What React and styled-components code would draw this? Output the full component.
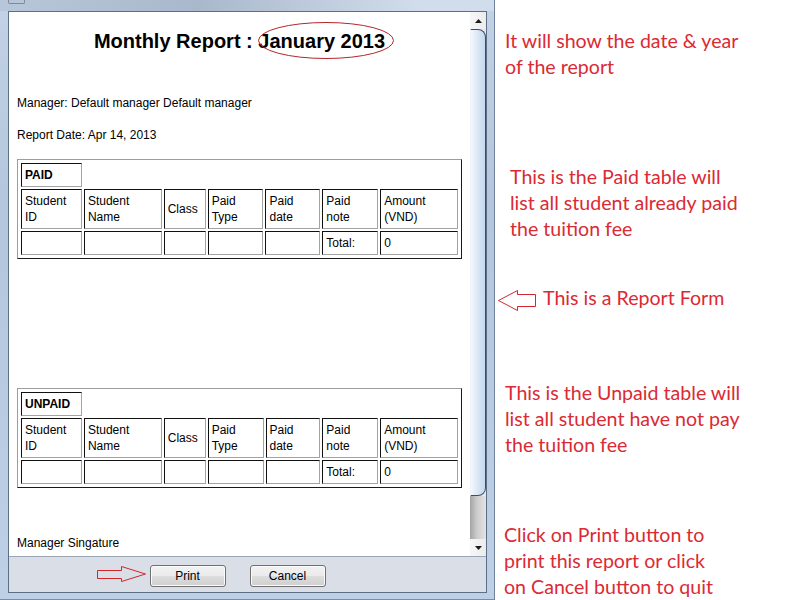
import React from "react";
import styled, { createGlobalStyle } from "styled-components";

const GlobalStyle = createGlobalStyle`
  html, body {
    margin: 0;
    padding: 0;
    background: #fff;
  }
  body {
    font-family: "Liberation Sans", Arial, sans-serif;
  }
`;

const Page = styled.div`
  display: flex;
  width: 800px;
  height: 600px;
  overflow: hidden;
  background: #fff;
`;

// ---- dialog window ----

const Window = styled.div`
  box-sizing: border-box;
  width: 495px;
  height: 600px;
  flex-shrink: 0;
  display: flex;
  flex-direction: column;
  padding: 0 7px 6px 8px;
  background: linear-gradient(to bottom, #c3d2e5 0%, #b4c6dc 35%, #bdd0e6 100%);
  border-right: 1px solid #6f819a;
  border-bottom: 1px solid #7a8ca5;
`;

const TitleStrip = styled.div`
  height: 11px;
  flex-shrink: 0;
  display: flex;
  align-items: flex-start;
  background: linear-gradient(to right, rgba(150, 165, 185, 0.25), rgba(120, 135, 155, 0.35) 40%, rgba(230, 238, 246, 0.4) 85%);
  margin: 0 -7px 0 -8px;
  padding-left: 8px;
`;

const WindowIcon = styled.div`
  width: 15px;
  height: 3px;
  border: 1px solid #7b8aa0;
  border-top: none;
  border-radius: 0 0 2px 2px;
`;

const Client = styled.div`
  flex: 1;
  display: flex;
  flex-direction: column;
  border: 1px solid #5d6e87;
  background: #dadee6;
`;

const Viewport = styled.div`
  box-sizing: border-box;
  height: 545px;
  display: flex;
  border-bottom: 1px solid #9aa5b5;
`;

const Pane = styled.div`
  flex: 1;
  background: #fff;
  padding: 0 8px;
  overflow: hidden;
  color: #000;
`;

const Title = styled.div`
  margin-top: 17px;
  text-align: center;
  font-size: 20px;
  font-weight: 700;
  line-height: 24px;
`;

const Highlight = styled.span`
  position: relative;
`;

const Ellipse = styled.svg`
  position: absolute;
  left: 0;
  top: -8px;
  overflow: visible;
`;

const InfoLine = styled.div`
  margin-top: ${(p) => p.$top}px;
  font-size: 12px;
  line-height: 14px;
`;

const ReportTable = styled.table`
  margin-top: ${(p) => p.$top}px;
  border-collapse: separate;
  border-spacing: 2px;
  padding: 1px;
  border: 1px solid;
  border-color: #9d9d9d #1a1a1a #1a1a1a #9d9d9d;
  font-size: 12px;
  line-height: 16px;
`;

const Cell = styled.td`
  width: ${(p) => (p.$w ? `${p.$w}px` : "auto")};
  padding: 3px;
  border: 1px solid;
  border-color: #111 #a3a3a3 #a3a3a3 #111;
  vertical-align: middle;
  text-align: left;
  font-weight: ${(p) => (p.$bold ? 700 : 400)};
`;

// ---- scrollbar ----

const Scrollbar = styled.div`
  width: 16px;
  display: flex;
  flex-direction: column;
  background: #e9e9e9;
`;

const ScrollButton = styled.div`
  height: 17px;
  display: flex;
  align-items: center;
  justify-content: center;
  background: linear-gradient(to right, #f7f7f7, #ececec);
`;

const Thumb = styled.div`
  box-sizing: border-box;
  height: 467px;
  border: 1px solid #3f4d63;
  border-left: 1px solid #eef4fa;
  border-radius: 0 8px 8px 0;
  background: linear-gradient(to right, #f4f8fc, #dbe8f5 45%, #c4d8ee 100%);
`;

const Track = styled.div`
  flex: 1;
  background: linear-gradient(to right, #a4a4a4, #cdcdcd 45%, #e4e4e4);
`;

// ---- button bar ----

const ButtonBar = styled.div`
  position: relative;
  flex: 1;
  display: flex;
  justify-content: center;
  align-items: flex-start;
  gap: 24px;
  padding: 8px 20px 0 0;
`;

const PushButton = styled.button`
  box-sizing: border-box;
  width: 76px;
  height: 22px;
  padding: 0;
  font-family: "Liberation Sans", Arial, sans-serif;
  font-size: 12px;
  color: #000;
  border: 1px solid #707070;
  border-radius: 3px;
  background: linear-gradient(to bottom, #f2f2f2 0%, #ebebeb 48%, #dddddd 52%, #cfcfcf 100%);
  box-shadow: inset 0 0 0 1px #fbfbfb;
`;

const PointerArrow = styled.svg`
  position: absolute;
  left: 88px;
  top: 9px;
`;

// ---- annotations ----

const Notes = styled.div`
  flex: 1;
  display: flex;
  flex-direction: column;
  font-family: Lato, "Open Sans", sans-serif;
  font-size: 19.6px;
  line-height: 26px;
  color: #db2a33;
`;

const Note = styled.div`
  margin-top: ${(p) => p.$top}px;
  padding-left: ${(p) => p.$indent}px;
`;

const NoteRow = styled.div`
  display: flex;
  align-items: flex-start;
  gap: 6px;
  margin-top: ${(p) => p.$top}px;
  padding-left: 3px;
`;

const LeftArrow = styled.svg`
  margin-top: 5px;
  flex-shrink: 0;
`;

const widths = [53, 70, 34, 48, 47, 48, 70];
const headers = ["Student ID", "Student Name", "Class", "Paid Type", "Paid date", "Paid note", "Amount (VND)"];
const totals = ["", "", "", "", "", "Total:", "0"];

function StudentTable({ label, top }) {
  return (
    <ReportTable $top={top}>
      <tbody>
        <tr>
          <Cell $bold>{label}</Cell>
        </tr>
        <tr>
          {headers.map((h, i) => (
            <Cell key={h} $w={widths[i]}>
              {h}
            </Cell>
          ))}
        </tr>
        <tr>
          {totals.map((t, i) => (
            <Cell key={i}>{t}</Cell>
          ))}
        </tr>
      </tbody>
    </ReportTable>
  );
}

function Triangle({ down }) {
  return (
    <svg width="7" height="4" viewBox="0 0 7 4">
      <polygon points={down ? "0,0 7,0 3.5,4" : "3.5,0 7,4 0,4"} fill="#1b1b1b" />
    </svg>
  );
}

export default function App() {
  return (
    <Page>
      <GlobalStyle />
      <Window>
        <TitleStrip>
          <WindowIcon />
        </TitleStrip>
        <Client>
          <Viewport>
            <Pane>
              <Title>
                Monthly Report :{" "}
                <Highlight>
                  January 2013
                  <Ellipse width="136" height="37">
                    <ellipse cx="68" cy="18.5" rx="67.5" ry="18" fill="none" stroke="#b3262c" strokeWidth="1" />
                  </Ellipse>
                </Highlight>
              </Title>
              <InfoLine $top={43}>Manager: Default manager Default manager</InfoLine>
              <InfoLine $top={18}>Report Date: Apr 14, 2013</InfoLine>
              <StudentTable label="PAID" top={17} />
              <StudentTable label="UNPAID" top={129} />
              <InfoLine $top={48}>Manager Singature</InfoLine>
            </Pane>
            <Scrollbar>
              <ScrollButton>
                <Triangle />
              </ScrollButton>
              <Thumb />
              <Track />
              <ScrollButton>
                <Triangle down />
              </ScrollButton>
            </Scrollbar>
          </Viewport>
          <ButtonBar>
            <PointerArrow width="50" height="17">
              <polygon
                points="0.5,4.5 24.5,4.5 24.5,0.5 48.5,8 24.5,15.5 24.5,12.5 0.5,12.5"
                fill="none"
                stroke="#d2262d"
                strokeWidth="1"
              />
            </PointerArrow>
            <PushButton>Print</PushButton>
            <PushButton>Cancel</PushButton>
          </ButtonBar>
        </Client>
      </Window>

      <Notes>
        <Note $top={28} $indent={10}>
          It will show the date &amp; year
          <br />
          of the report
        </Note>
        <Note $top={84} $indent={15}>
          This is the Paid table will
          <br />
          list all student already paid
          <br />
          the tuition fee
        </Note>
        <NoteRow $top={43}>
          <LeftArrow width="39" height="22">
            <polygon
              points="0.5,10.5 19.5,0.5 19.5,4.5 37.5,4.5 37.5,16.5 19.5,16.5 19.5,20.5"
              fill="none"
              stroke="#d2262d"
              strokeWidth="1"
            />
          </LeftArrow>
          <span>This is a Report Form</span>
        </NoteRow>
        <Note $top={68} $indent={10}>
          This is the Unpaid table will
          <br />
          list all student have not pay
          <br />
          the tuition fee
        </Note>
        <Note $top={64} $indent={9}>
          Click on Print button to
          <br />
          print this report or click
          <br />
          on Cancel button to quit
        </Note>
      </Notes>
    </Page>
  );
}
